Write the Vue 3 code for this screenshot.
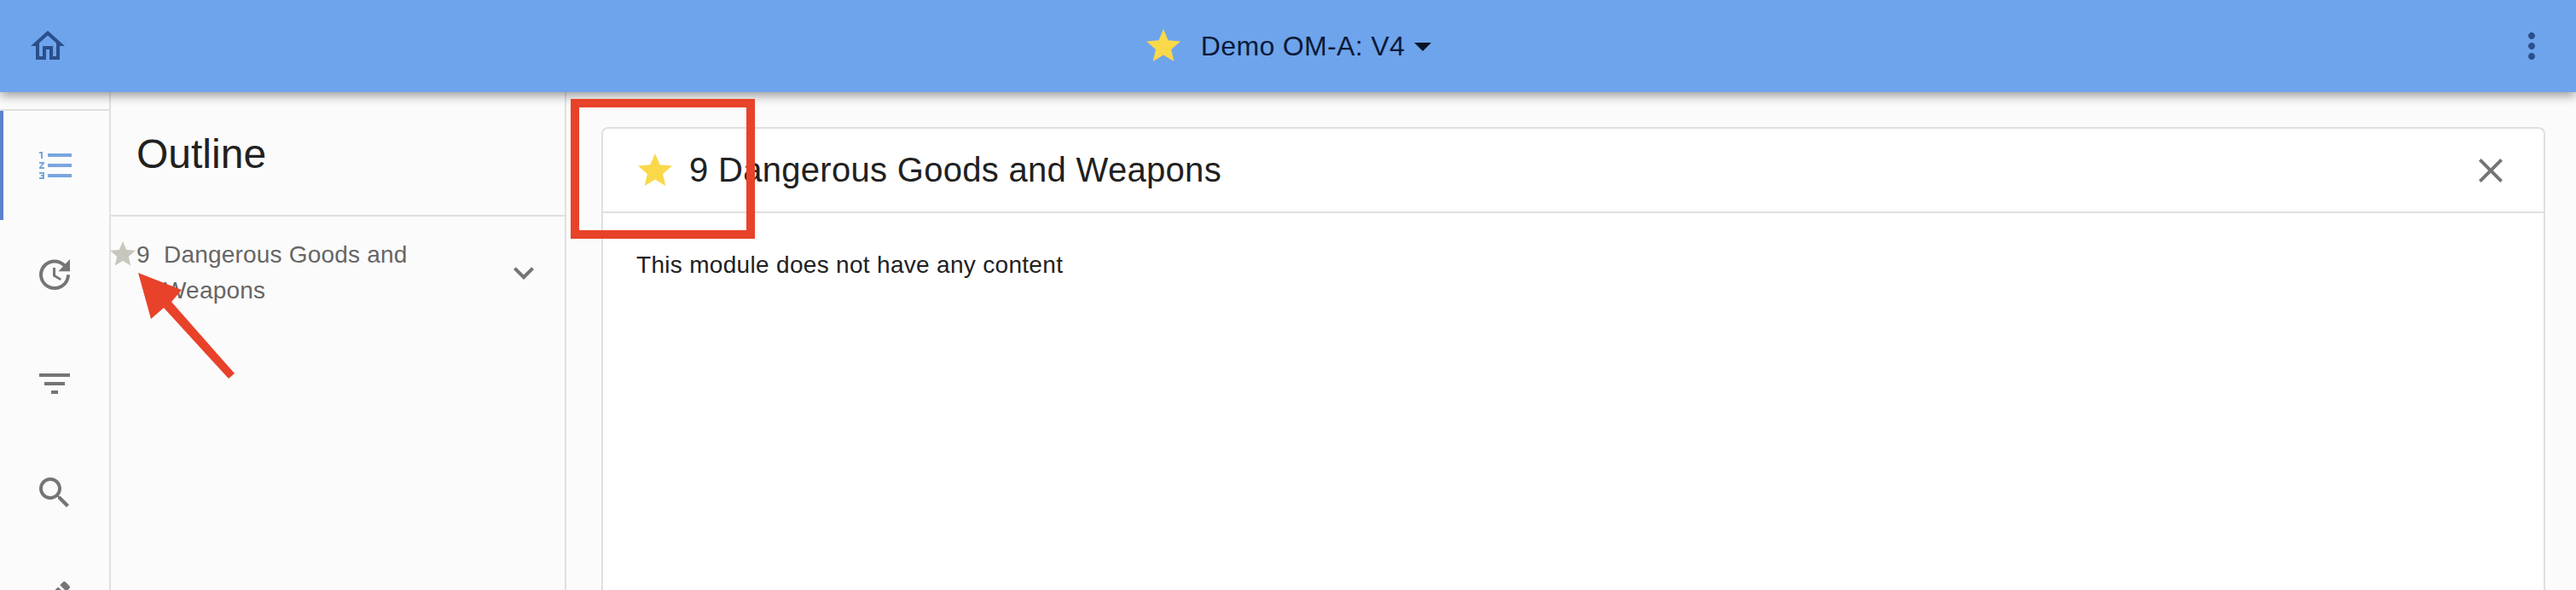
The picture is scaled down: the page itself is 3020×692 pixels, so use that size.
<script setup>
const railItems = [
  { name: 'outline', path: 'M2 17h2v.5H3v1h1v.5H2v1h3v-4H2v1zm1-9h1V4H2v1h1v3zm-1 3h1.8L2 13.1v.9h3v-1H3.2L5 10.9V10H2v1zm5-6v2h14V5H7zm0 14h14v-2H7v2zm0-6h14v-2H7v2z' },
  { name: 'history', path: 'M21 10.12h-6.78l2.74-2.82c-2.73-2.7-7.15-2.8-9.88-.1-2.73 2.71-2.73 7.08 0 9.79s7.15 2.71 9.88 0C18.32 15.65 19 14.08 19 12.1h2c0 1.98-.88 4.55-2.64 6.29-3.51 3.48-9.21 3.48-12.72 0-3.5-3.47-3.53-9.11-.02-12.58s9.14-3.47 12.65 0L21 3v7.12zM12.5 8v4.25l3.5 2.08-.72 1.21L11 13V8h1.5z' },
  { name: 'filter', path: 'M10 18h4v-2h-4v2zM3 6v2h18V6H3zm3 7h12v-2H6v2z' },
  { name: 'search', path: 'M15.5 14h-.79l-.28-.27C15.41 12.59 16 11.11 16 9.5 16 5.91 13.09 3 9.5 3S3 5.91 3 9.5 5.91 16 9.5 16c1.61 0 3.09-.59 4.23-1.57l.27.28v.79l5 4.99L20.49 19l-4.99-5zm-6 0C7.01 14 5 11.99 5 9.5S7.01 5 9.5 5 14 7.01 14 9.5 11.99 14 9.5 14z' },
  { name: 'edit', path: 'M3 17.25V21h3.75L17.81 9.94l-3.75-3.75L3 17.25zM20.71 7.04c.39-.39.39-1.02 0-1.41l-2.34-2.34c-.39-.39-1.02-.39-1.41 0l-1.83 1.83 3.75 3.75 1.83-1.83z' },
]
const star = 'M12 17.27L18.18 21l-1.64-7.03L22 9.24l-7.19-.61L12 2 9.19 8.63 2 9.24l5.46 4.73L5.82 21z'
</script>

<template>
  <div class="page">
    <header class="toolbar">
      <svg class="icon home" viewBox="0 0 24 24"><path d="M12 5.69l5 4.5V18h-2v-6H9v6H7v-7.81l5-4.5M12 3L2 12h3v8h6v-6h2v6h6v-8h3L12 3z" /></svg>
      <div class="project">
        <svg class="icon yellow" viewBox="0 0 24 24"><path :d="star" /></svg>
        <span class="project-name">Demo OM-A: V4</span>
        <svg class="icon caret" viewBox="0 0 24 24"><path d="M7 10l5 5 5-5z" /></svg>
      </div>
      <svg class="icon home" viewBox="0 0 24 24"><path d="M12 8c1.1 0 2-.9 2-2s-.9-2-2-2-2 .9-2 2 .9 2 2 2zm0 2c-1.1 0-2 .9-2 2s.9 2 2 2 2-.9 2-2-.9-2-2-2zm0 6c-1.1 0-2 .9-2 2s.9 2 2 2 2-.9 2-2-.9-2-2-2z" /></svg>
    </header>

    <div class="body">
      <nav class="rail">
        <div v-for="item in railItems" :key="item.name" class="rail-item">
          <svg class="icon" viewBox="0 0 24 24"><path :d="item.path" /></svg>
        </div>
      </nav>

      <aside class="outline">
        <h2 class="outline-title">Outline</h2>
        <div class="outline-item">
          <svg class="item-star" viewBox="0 0 24 24"><path :d="star" /></svg>
          <span class="item-num">9</span>
          <span class="item-text">Dangerous Goods and Weapons</span>
          <svg class="icon chevron" viewBox="0 0 24 24"><path d="M16.59 8.59L12 13.17 7.41 8.59 6 10l6 6 6-6z" /></svg>
        </div>
      </aside>

      <main class="content">
        <section class="card">
          <div class="card-head">
            <svg class="icon yellow" viewBox="0 0 24 24"><path :d="star" /></svg>
            <h1 class="card-title">9 Dangerous Goods and Weapons</h1>
            <svg class="icon close" viewBox="0 0 24 24"><path d="M19 6.41L17.59 5 12 10.59 6.41 5 5 6.41 10.59 12 5 17.59 6.41 19 12 13.41 17.59 19 19 17.59 13.41 12z" /></svg>
          </div>
          <p class="card-text">This module does not have any content</p>
        </section>
      </main>
    </div>

    <!-- annotations drawn on top of the screenshot -->
    <div class="red-box"></div>
    <svg class="red-arrow" viewBox="0 0 3020 692">
      <polygon points="162,320 213,340 201,354 275,438 268,444 192,361 177,374" />
    </svg>
  </div>
</template>

<style>
html, body { margin: 0; background: #fbfbfb; }
</style>

<style scoped>
.page {
  position: relative;
  width: 3020px;
  height: 692px;
  overflow: hidden;
  display: flex;
  flex-direction: column;
  background: #fbfbfb;
  font-family: "Liberation Sans", Arial, sans-serif;
  color: #212121;
}
.icon { width: 48px; height: 48px; flex: none; fill: #757575; display: block; }

.toolbar {
  position: relative;
  z-index: 2;
  height: 108px;
  flex: none;
  display: flex;
  align-items: center;
  padding: 0 28px 0 32px;
  background: #6ea4ec;
  box-shadow: 0 4px 12px rgba(0, 0, 0, 0.4);
}
.home { fill: #2a4f8c; }
.project { flex: 1; display: flex; align-items: center; justify-content: center; padding-left: 8px; }
.yellow { fill: #f9d84a; }
.project-name { margin-left: 20px; font-size: 32px; letter-spacing: 0.35px; color: #0b1a38; }
.caret { fill: #0b1426; margin-left: -3px; }

.body { flex: 1; display: flex; min-height: 0; }

.rail {
  width: 128px;
  flex: none;
  padding-top: 20px;
  border-right: 2px solid #e0e0e0;
}
.rail-item {
  height: 128px;
  display: flex;
  align-items: center;
  justify-content: center;
}
.rail-item:first-child { border-top: 2px solid #e0e0e0; box-shadow: inset 4px 0 0 #5a82cc; }
.rail-item:first-child .icon { fill: #7aa5de; transform: translateX(2px); }
.rail-item:last-child { height: 116px; }

.outline {
  width: 532px;
  flex: none;
  border-right: 2px solid #e0e0e0;
}
.outline-title {
  margin: 0;
  height: 146px;
  box-sizing: border-box;
  display: flex;
  align-items: center;
  padding-left: 30px;
  border-bottom: 2px solid #e0e0e0;
  font-size: 48px;
  font-weight: 400;
}
.outline-item {
  position: relative;
  display: flex;
  align-items: center;
  padding: 24px 24px 24px 30px;
  font-size: 28px;
  line-height: 42px;
  letter-spacing: 0.2px;
  color: #666;
}
.item-star {
  position: absolute;
  left: -4px;
  top: 26px;
  width: 36px;
  height: 36px;
  fill: #c8c7bd;
}
.item-num { width: 32px; flex: none; align-self: flex-start; }
.item-text { width: 340px; flex: none; }
.chevron { margin-left: auto; }

.content { flex: 1; padding: 41px 36px 0 41px; min-width: 0; }
.card {
  height: 100%;
  box-sizing: border-box;
  border: 2px solid #e0e0e0;
  border-bottom: 0;
  border-radius: 8px 8px 0 0;
  background: #fff;
}
.card-head {
  height: 99px;
  box-sizing: border-box;
  display: flex;
  align-items: center;
  padding: 0 38px 0 37px;
  border-bottom: 2px solid #e0e0e0;
}
.card-title { margin: 0 0 0 16px; font-size: 40px; font-weight: 400; letter-spacing: 0.3px; flex: 1; }
.card-text { margin: 0; padding: 40px 39px 0; font-size: 28px; line-height: 42px; letter-spacing: 0.31px; }

.red-box {
  position: absolute;
  left: 669px;
  top: 116px;
  width: 216px;
  height: 164px;
  box-sizing: border-box;
  border: 10px solid #e8422a;
  z-index: 3;
}
.red-arrow {
  position: absolute;
  left: 0;
  top: 0;
  width: 3020px;
  height: 692px;
  z-index: 3;
  fill: #e8422a;
}
</style>
